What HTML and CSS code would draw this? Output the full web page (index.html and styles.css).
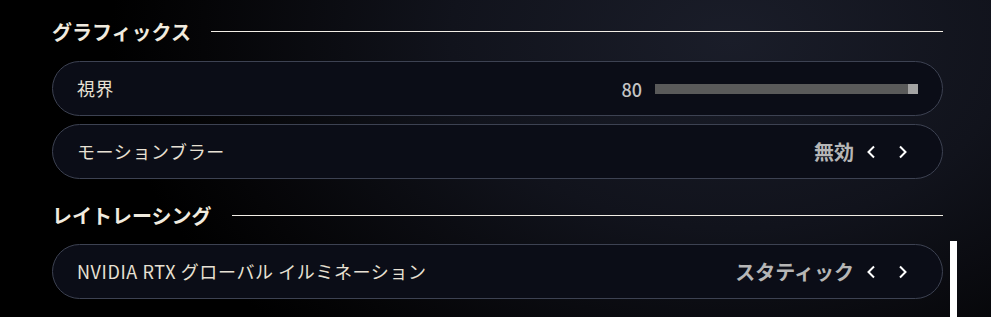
FILE: index.html
```html
<!DOCTYPE html>
<html lang="ja">
<head>
	<meta charset="UTF-8">
	<title>設定</title>
	<link rel="stylesheet" href="styles.css">
</head>
<body>
	<div class="settings">
		<div class="section-title section-first">
			<span>グラフィックス</span>
			<i class="section-line"></i>
		</div>
		<div class="option">
			<div class="option-label">視界</div>
			<div class="option-slider">
				<span class="slider-value">80</span>
				<div class="slider-track"><div class="slider-fill" style="width: 100%"></div><div class="slider-thumb"></div></div>
			</div>
		</div>
		<div class="option">
			<div class="option-label">モーションブラー</div>
			<div class="option-select">
				<span class="select-value">無効</span>
				<a href="javascript:void(0);" class="select-btn"><svg width="10" height="14" viewBox="0 0 10 14"><path d="M8 1.5 L2.5 7 L8 12.5" fill="none" stroke="#fff" stroke-width="2"/></svg></a>
				<a href="javascript:void(0);" class="select-btn"><svg width="10" height="14" viewBox="0 0 10 14"><path d="M2 1.5 L7.5 7 L2 12.5" fill="none" stroke="#fff" stroke-width="2"/></svg></a>
			</div>
		</div>

		<div class="section-title">
			<span>レイトレーシング</span>
			<i class="section-line"></i>
		</div>
		<div class="option">
			<div class="option-label">NVIDIA RTX グローバル イルミネーション</div>
			<div class="option-select">
				<span class="select-value">スタティック</span>
				<a href="javascript:void(0);" class="select-btn"><svg width="10" height="14" viewBox="0 0 10 14"><path d="M8 1.5 L2.5 7 L8 12.5" fill="none" stroke="#fff" stroke-width="2"/></svg></a>
				<a href="javascript:void(0);" class="select-btn"><svg width="10" height="14" viewBox="0 0 10 14"><path d="M2 1.5 L7.5 7 L2 12.5" fill="none" stroke="#fff" stroke-width="2"/></svg></a>
			</div>
		</div>
	</div>
	<!-- スクロールバー -->
	<div class="scroll-thumb"></div>
</body>
</html>
```

FILE: styles.css
```css
* {
	margin: 0;
	padding: 0;
	box-sizing: border-box;
}
html, body {
	width: 100%;
	height: 100%;
	overflow: hidden;
}
body {
	position: relative;
	font-family: "Noto Sans CJK JP", "Noto Sans", sans-serif;
	color: #e8e1d4;
	background-color: #000;
	background-image: radial-gradient(ellipse 620px 420px at 730px 40px, #1a1d29 0%, #11131c 45%, #050507 85%, #000 100%);
}
a {
	text-decoration: none;
	color: #fff;
}
.settings {
	width: 891px;
	margin-left: 52px;
	padding-top: 11px;
}
.section-title {
	display: flex;
	align-items: center;
	gap: 20px;
	height: 40px;
	margin-top: 16px;
	margin-bottom: 9px;
	font-size: 20px;
	font-weight: bold;
	color: #f1ebdf;
}
.section-first {
	margin-top: 0;
	margin-bottom: 10px;
}
.section-line {
	flex: 1;
	height: 1px;
	background-color: #f2eee6;
}
.option {
	display: flex;
	align-items: center;
	justify-content: space-between;
	height: 55px;
	margin-bottom: 8px;
	padding: 0 24px;
	border: 1px solid #3d4252;
	border-radius: 28px;
	background-color: #0b0d17;
}
.option-label {
	font-size: 18px;
	letter-spacing: 0.6px;
	margin-top: -1px;
}
.option-slider {
	display: flex;
	align-items: center;
	gap: 13px;
}
.slider-value {
	font-size: 18px;
	font-weight: 500;
	color: #c4c4c4;
}
.slider-track {
	position: relative;
	display: flex;
	width: 263px;
	height: 10px;
	background-color: #333;
}
.slider-fill {
	height: 100%;
	background-color: #5a5a5a;
}
.slider-thumb {
	position: absolute;
	right: 0;
	top: 0;
	width: 10px;
	height: 10px;
	background-color: #a3a3a3;
}
.option-select {
	display: flex;
	align-items: center;
	gap: 8px;
	margin-right: 3px;
}
.select-value {
	margin-right: -3px;
	font-size: 20px;
	font-weight: bold;
	color: #b6b6b6;
}
.select-btn {
	display: flex;
	align-items: center;
	justify-content: center;
	width: 24px;
	height: 24px;
}
.scroll-thumb {
	position: absolute;
	left: 950px;
	top: 241px;
	width: 7px;
	height: 80px;
	background-color: #fff;
}
```
